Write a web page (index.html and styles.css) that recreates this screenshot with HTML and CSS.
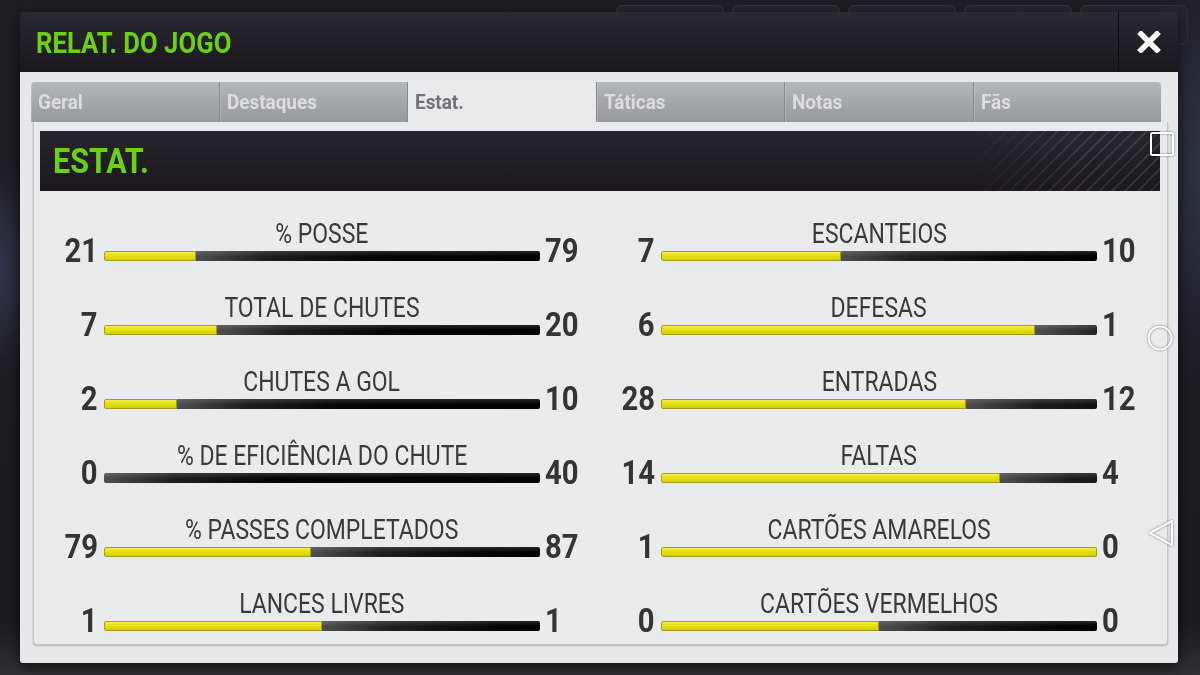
FILE: index.html
```html
<!DOCTYPE html>
<html lang="pt">
<head>
    <meta charset="UTF-8">
    <meta name="viewport" content="width=device-width, initial-scale=1.0">
    <title>Relat. do jogo</title>
    <link rel="stylesheet" href="styles.css">
</head>
<body>
    <div class="backdrop">
        <div class="bg-buttons">
            <span></span><span></span><span></span><span></span><span></span>
        </div>
    </div>

    <div class="modal">
        <div class="modal-head">
            <h1><span class="narrow">RELAT. DO JOGO</span></h1>
            <button class="close">
                <svg width="24" height="22" viewBox="0 0 24 22">
                    <path d="M4 3 L20 19 M20 3 L4 19" stroke="#fff" stroke-width="5.5" stroke-linecap="square" fill="none"/>
                </svg>
            </button>
        </div>

        <div class="modal-body">
            <div class="tabs">
                <div class="tab"><span class="narrow">Geral</span></div>
                <div class="tab"><span class="narrow">Destaques</span></div>
                <div class="tab active"><span class="narrow">Estat.</span></div>
                <div class="tab"><span class="narrow">Táticas</span></div>
                <div class="tab"><span class="narrow">Notas</span></div>
                <div class="tab"><span class="narrow">Fãs</span></div>
            </div>

            <div class="panel">
                <div class="panel-head">
                    <h2><span class="narrow">ESTAT.</span></h2>
                </div>
                <div class="stats">
                    <div class="stat-col" id="colLeft"></div>
                    <div class="stat-col" id="colRight"></div>
                </div>
            </div>
        </div>
    </div>

    <div class="sysnav">
        <svg width="26" height="26" viewBox="0 0 26 26"><rect x="3" y="1" width="22" height="22" rx="1.5" fill="none" stroke="#fff" stroke-width="2"/></svg>
        <svg width="26" height="26" viewBox="0 0 26 26"><circle cx="12" cy="12" r="11.5" fill="none" stroke="#fff" stroke-width="2"/></svg>
        <svg width="26" height="26" viewBox="0 0 26 26"><path d="M2 13 L24 1 L24 25 Z" fill="none" stroke="#fff" stroke-width="2" stroke-linejoin="round"/></svg>
    </div>

    <script>
        const leftStats = [
            ['% POSSE', 21, 79],
            ['TOTAL DE CHUTES', 7, 20],
            ['CHUTES A GOL', 2, 10],
            ['% DE EFICIÊNCIA DO CHUTE', 0, 40],
            ['% PASSES COMPLETADOS', 79, 87],
            ['LANCES LIVRES', 1, 1]
        ];

        const rightStats = [
            ['ESCANTEIOS', 7, 10],
            ['DEFESAS', 6, 1],
            ['ENTRADAS', 28, 12],
            ['FALTAS', 14, 4],
            ['CARTÕES AMARELOS', 1, 0],
            ['CARTÕES VERMELHOS', 0, 0]
        ];

        function renderStats(list, colId) {
            const col = document.getElementById(colId);
            list.forEach(([label, home, away]) => {
                const total = home + away;
                const share = total === 0 ? 50 : (home / total) * 100;
                const row = document.createElement('div');
                row.className = 'stat-row';
                row.innerHTML = `
                    <div class="num num-home"><span class="narrow">${home}</span></div>
                    <div class="stat-mid">
                        <div class="stat-label"><span class="narrow">${label}</span></div>
                        <div class="bar">
                            <div class="bar-fill" style="width: ${share}%"></div>
                            <div class="bar-rest"></div>
                        </div>
                    </div>
                    <div class="num num-away"><span class="narrow">${away}</span></div>
                `;
                col.appendChild(row);
            });
        }

        renderStats(leftStats, 'colLeft');
        renderStats(rightStats, 'colRight');
    </script>
</body>
</html>
```

FILE: styles.css
```css
body {
    margin: 0;
    width: 1200px;
    height: 675px;
    overflow: hidden;
    background: #1d1a21;
    font-family: Roboto, "Liberation Sans", Arial, sans-serif;
}
.narrow {
    display: inline-block;
    transform: scaleX(.82);
    transform-origin: left center;
    white-space: nowrap;
}
.backdrop {
    height: 675px;
    background:
        radial-gradient(ellipse 40px 110px at 0 270px, rgba(70, 90, 125, .45), transparent),
        radial-gradient(ellipse 60px 220px at 1200px 170px, rgba(60, 75, 105, .5), transparent),
        linear-gradient(to bottom, #1f1c23 0, #1c191f 92%, #323034 100%);
}
.bg-buttons {
    display: flex;
    justify-content: flex-end;
    gap: 8px;
    padding: 5px 12px 0 0;
}
.bg-buttons span {
    width: 108px;
    height: 40px;
    box-sizing: border-box;
    border-radius: 6px;
    background: #28252d;
    border: 1px solid #35323b;
}
.modal {
    position: absolute;
    left: 20px;
    top: 12px;
    width: 1158px;
    box-shadow: 0 4px 14px rgba(0, 0, 0, .6);
    border-radius: 4px;
}
.modal-head {
    display: flex;
    height: 60px;
    background: linear-gradient(#2c2832, #1a161d);
    border-radius: 4px 4px 0 0;
}
.modal-head h1 {
    flex: 1;
    margin: 0;
    padding-left: 16px;
    font-size: 29.5px;
    font-weight: bold;
    line-height: 62px;
    color: #6cd20f;
}
.modal-head h1 .narrow,
.panel-head h2 .narrow {
    transform: scaleX(.87);
}
.close {
    width: 60px;
    padding: 0;
    border: none;
    border-left: 1px solid #0c0a0e;
    background: none;
    display: flex;
    align-items: center;
    justify-content: center;
}
.modal-body {
    background: #e6e8e9;
    padding: 10px 10px 18px 11px;
    border-radius: 0 0 3px 3px;
}
.tabs {
    display: flex;
    height: 40px;
    margin-right: 7px;
    border-radius: 4px 4px 0 0;
    overflow: hidden;
}
.tab {
    flex: 1;
    padding-left: 7px;
    font-size: 21px;
    font-weight: bold;
    line-height: 41px;
    color: #dcdedf;
    background: linear-gradient(#b3b6ba, #96999e);
    border-left: 1px solid #85888d;
    box-shadow: inset 1px 0 0 rgba(255, 255, 255, .18);
}
.tab .narrow {
    transform: scaleX(.9);
}
.tab:first-child {
    border-left: none;
}
.tab.active {
    background: #e8eaeb;
    color: #707377;
    box-shadow: none;
}
.panel {
    height: 523px;
    box-sizing: border-box;
    margin-left: 2px;
    padding: 9px 7px 0 6px;
    background: #e9ebec;
    border: 1px solid #c4c6c8;
    border-top: none;
    border-radius: 0 0 4px 4px;
    box-shadow: 0 1px 2px rgba(0, 0, 0, .25);
}
.panel-head {
    position: relative;
    height: 60px;
    background: linear-gradient(#29252e, #1b171e);
    overflow: hidden;
}
.panel-head::after {
    content: "";
    position: absolute;
    top: 0;
    right: 0;
    bottom: 0;
    width: 190px;
    background: repeating-linear-gradient(135deg, transparent 0 7px, rgba(255, 255, 255, .1) 7px 9px);
    -webkit-mask-image: linear-gradient(to right, transparent, #000 60%);
}
.panel-head h2 {
    margin: 0;
    padding-left: 13px;
    font-size: 35px;
    font-weight: bold;
    line-height: 62px;
    color: #6cd20f;
}
.stats {
    display: flex;
    gap: 2px;
    padding: 10px 0 0 4px;
}
.stat-col {
    width: 555px;
}
.stat-row {
    display: grid;
    grid-template-columns: 60px 436px 59px;
    align-items: end;
    height: 74px;
    box-sizing: border-box;
    padding-bottom: 14px;
}
.num {
    font-size: 34px;
    font-weight: bold;
    line-height: 34px;
    color: #343436;
    margin-bottom: -6px;
}
.num .narrow {
    transform: scaleX(.86);
}
.num-home {
    text-align: right;
    padding-right: 6px;
}
.num-home .narrow {
    transform-origin: right center;
}
.num-away {
    padding-left: 5px;
}
.stat-label {
    text-align: center;
    font-size: 28px;
    line-height: 30px;
    color: #3a3a3c;
    margin-bottom: 2px;
    white-space: nowrap;
}
.stat-label .narrow {
    transform-origin: center center;
}
.bar {
    display: flex;
    height: 10px;
    border-radius: 2px;
    overflow: hidden;
}
.bar-fill {
    background: linear-gradient(#f5f25c, #e4df12 50%, #d2cc02);
    box-shadow: inset 0 0 0 1px #a29c22;
    border-radius: 2px 0 0 2px;
}
.bar-rest {
    flex: 1;
    background:
        linear-gradient(to bottom, rgba(255, 255, 255, .14), rgba(255, 255, 255, 0) 55%),
        linear-gradient(to right, #4e4e4e 0, #1e1e1e 70px, #050505 170px, #000);
}
.sysnav {
    position: absolute;
    left: 1148px;
    top: 132px;
    height: 414px;
    display: flex;
    flex-direction: column;
    justify-content: space-between;
    filter: drop-shadow(0 0 1px rgba(0, 0, 0, .5));
}
```
